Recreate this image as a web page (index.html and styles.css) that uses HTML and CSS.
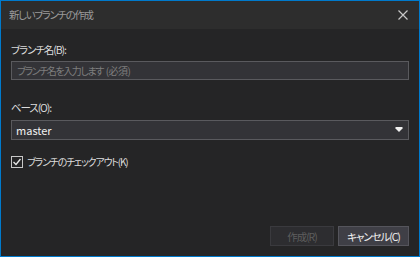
FILE: index.html
```html
<!DOCTYPE html>
<html lang="ja">
<head>
<meta charset="utf-8">
<link rel="stylesheet" href="styles.css">
</head>
<body>
<div class="dialog">
  <div class="titlebar">
    <span class="title">新しいブランチの作成</span>
    <svg class="close" width="10" height="10" viewBox="0 0 10 10"><path d="M0.5 0.5 L9.5 9.5 M9.5 0.5 L0.5 9.5" stroke="#c8c8c8" stroke-width="1.2" fill="none"/></svg>
  </div>
  <div class="content">
    <div class="label">ブランチ名(B):</div>
    <div class="input"><span class="placeholder">ブランチ名を入力します <span class="paren">(必須)</span></span></div>
    <div class="label second">ベース(O):</div>
    <div class="select">
      <span class="value">master</span>
      <svg class="arrow" width="8" height="6" viewBox="0 0 8 6"><polygon points="0.5,0 7.5,0 7.5,1.5 4,5 0.5,1.5" fill="#f0f0f0"/></svg>
    </div>
    <div class="check">
      <svg class="box" width="12" height="12" viewBox="0 0 12 12"><rect x="0.5" y="0.5" width="11" height="11" fill="none" stroke="#c8c8c8"/><path d="M2.5 6 L5 8.5 L9.5 3" stroke="#e8e8e8" stroke-width="1.3" fill="none"/></svg>
      <span class="check-label">ブランチのチェックアウト(K)</span>
    </div>
    <div class="buttons">
      <div class="btn disabled">作成(R)</div>
      <div class="btn cancel">キャンセル(C)</div>
    </div>
  </div>
</div>
</body>
</html>
```
FILE: styles.css
```css
html, body {
  margin: 0;
  padding: 0;
  background: #252526;
}
body {
  font-family: "Noto Sans CJK JP", "Noto Sans", sans-serif;
  font-size: 10.5px;
  font-feature-settings: "palt";
  color: #dcdcdc;
}
.dialog {
  width: 420px;
  height: 257px;
  box-sizing: border-box;
  border: 1px solid #007acc;
  background: #252526;
  display: flex;
  flex-direction: column;
}
.titlebar {
  height: 28px;
  background: #2d2d2d;
  display: flex;
  align-items: center;
  justify-content: space-between;
  padding: 0 11px 0 8px;
}
.title {
  color: #9a9a9a;
  line-height: 16px;
  letter-spacing: -1.4px;
}
.close {
  display: block;
}
.content {
  flex: 1;
  display: flex;
  flex-direction: column;
  padding: 13px 10px 10px 10px;
}
.label {
  line-height: 16px;
  margin-bottom: 3px;
  letter-spacing: -1.1px;
}
.label.second {
  margin-top: 20px;
  margin-bottom: 4px;
}
.input {
  height: 19px;
  box-sizing: border-box;
  border: 1px solid #5a5a5e;
  background: #333337;
  display: flex;
  align-items: center;
  padding-left: 5px;
}
.placeholder {
  color: #7e7e7e;
  font-size: 10px;
  letter-spacing: -1.4px;
  word-spacing: 2px;
}
.paren {
  letter-spacing: -0.6px;
}
.select {
  height: 20px;
  box-sizing: border-box;
  border: 1px solid #5a5a5e;
  background: #333337;
  display: flex;
  align-items: center;
  justify-content: space-between;
  padding: 0 5px 0 4px;
  color: #f0f0f0;
  font-size: 11px;
}
.arrow {
  display: block;
}
.check {
  margin-top: 15px;
  display: flex;
  align-items: center;
  gap: 4px;
}
.box {
  display: block;
}
.check-label {
  font-size: 10px;
  letter-spacing: -1.2px;
  line-height: 14px;
}
.buttons {
  margin-top: auto;
  display: flex;
  justify-content: flex-end;
  gap: 4px;
}
.btn {
  height: 20px;
  box-sizing: border-box;
  display: flex;
  align-items: center;
  justify-content: center;
  letter-spacing: -1.1px;
}
.btn.disabled {
  width: 64px;
  background: #2d2d30;
  border: 1px solid #3a3a3e;
  color: #5e5e5e;
}
.btn.cancel {
  width: 71px;
  background: #3f3f46;
  border: 1px solid #55555c;
  color: #f1f1f1;
}
```
